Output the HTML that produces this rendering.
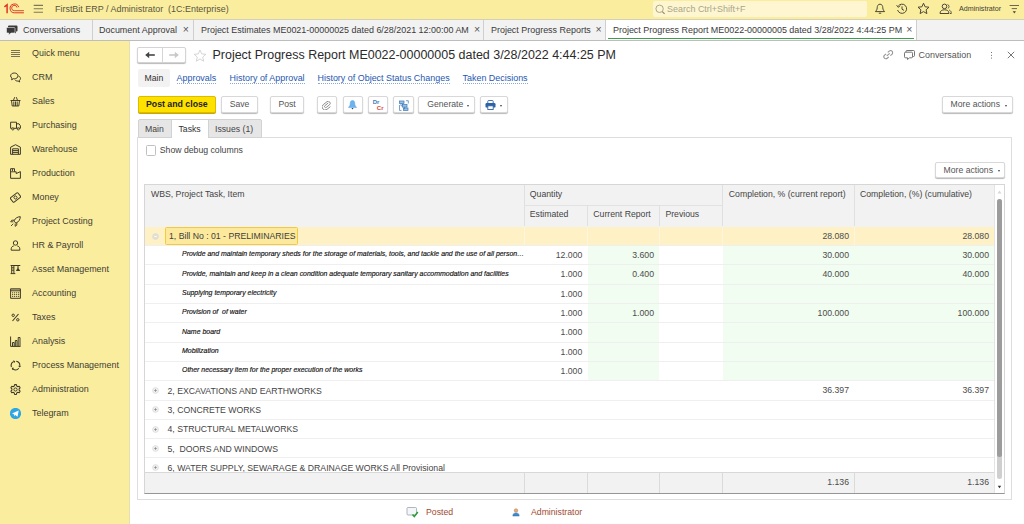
<!DOCTYPE html>
<html>
<head>
<meta charset="utf-8">
<title>Project Progress Report</title>
<style>
*{box-sizing:border-box;margin:0;padding:0}
html,body{width:1024px;height:524px;overflow:hidden;background:#fff;font-family:"Liberation Sans",Arial,sans-serif;color:#333}
.abs{position:absolute}
#top{position:absolute;left:0;top:0;width:1024px;height:19.600px;background:#fbed9e}
#top .title{position:absolute;left:55px;top:4px;font-size:8.95px;color:#59563f;white-space:pre;line-height:11px}
#search{position:absolute;left:653.400px;top:1.300px;width:213.600px;height:15.600px;background:#fdf6d0;border-radius:2px}
#search span{position:absolute;left:13.700px;top:1.700px;font-size:8.95px;color:#aaa58a;line-height:12px}
#tabs{position:absolute;left:0;top:19px;width:1024px;height:22px;background:#f2f2f2;border-top:1px solid #d4d0b8;border-bottom:1px solid #bdbdbd}
.tab{position:absolute;top:0;height:20px;border-right:1px solid #cfcfcf;font-size:8.95px;line-height:20px;color:#3a3a3a;white-space:nowrap}
.tab .x{position:absolute;top:-1.200px;font-size:10.500px;color:#555}
#side{position:absolute;left:0;top:41px;width:129.700px;border-right:1px solid #e6dfb4;height:484px;background:#fbed9e}
.mi{position:absolute;left:32px;font-size:8.95px;color:#3d3d33;line-height:12px;white-space:nowrap}
.ic{position:absolute;left:10px}
#main{position:absolute;left:130.700px;top:41px;width:894px;height:484px;background:#fff}
.btn{position:absolute;height:17px;border:1px solid #d8d8d8;border-radius:2px;background:#fff;font-size:8.65px;line-height:15.300px;text-align:center;color:#555;box-shadow:0 1px 1px rgba(0,0,0,0.28);white-space:nowrap}
.lnk{position:absolute;top:72px;font-size:8.95px;line-height:12px;color:#2657b0;border-bottom:1px dotted #8fa6d8;white-space:nowrap;height:12px}
.t{position:absolute;white-space:nowrap;font-size:8.7px;line-height:12px;color:#444}
.num{position:absolute;white-space:nowrap;font-size:8.7px;line-height:12px;color:#4c4c4c;text-align:right}
.it{position:absolute;left:182px;-webkit-text-stroke:0.15px #111;white-space:nowrap;font-size:6.95px;line-height:10px;color:#111;font-style:italic}
.hl{position:absolute;left:145px;width:850px;height:1px;background:#ececec}
.vl{position:absolute;width:1px;background:#dcdcdc}
.dd{position:absolute;top:7.600px;width:0;height:0;border-left:1.800px solid transparent;border-right:1.800px solid transparent;border-top:2px solid #444}
</style>
</head>
<body>
<!-- top bar -->
<div id="top">
  <svg class="abs" style="left:0;top:0" width="26" height="18" viewBox="0 0 26 18">
    <g fill="none" stroke="#df3327">
      <path d="M4.400 6.800L7.100 4.700V13.200" stroke-width="1.500"/>
      <path d="M18.700 7.200A4.400 4.400 0 1 0 14.500 12.800H23.900" stroke-width="1"/>
      <path d="M17 7.600A2.700 2.700 0 1 0 14.500 10.700H23.900" stroke-width="0.900"/>
    </g>
  </svg>
  <svg class="abs" style="left:33px;top:3px" width="11" height="12" viewBox="0 0 11 12"><g stroke="#7d785a" stroke-width="1.100"><path d="M0.700 2.400H10M0.700 5.800H10M0.700 9.200H10"/></g></svg>
  <div class="title">FirstBit ERP / Administrator  (1C:Enterprise)</div>
  <div id="search">
    <svg class="abs" style="left:1.500px;top:2.500px" width="11" height="11" viewBox="0 0 11 11"><circle cx="4.600" cy="4.800" r="3.700" fill="none" stroke="#a29e86" stroke-width="0.900"/><path d="M7.300 7.600L9.600 9.900" stroke="#8a866e" stroke-width="1.100"/></svg>
    <span>Search Ctrl+Shift+F</span>
  </div>
  <!-- bell -->
  <svg class="abs" style="left:873.500px;top:3px" width="12" height="12" viewBox="0 0 12 12"><path d="M6 1.2C4 1.2 3.2 3 3.2 4.8C3.2 6.8 2.2 7.6 1.4 8.6H10.6C9.8 7.600 8.800 6.800 8.800 4.800C8.800 3 8 1.200 6 1.200Z M4.800 10.200H7.200" fill="none" stroke="#4a4738" stroke-width="1"/></svg>
  <!-- history -->
  <svg class="abs" style="left:895.600px;top:3px" width="12" height="12" viewBox="0 0 12 12"><path d="M2.2 3.200A4.600 4.600 0 1 1 1.600 7" fill="none" stroke="#4a4738" stroke-width="1"/><path d="M6 3.400V6.200L8 7.400" fill="none" stroke="#4a4738" stroke-width="1"/><path d="M0.600 2.200L2.400 4.400L4.200 2.600" fill="none" stroke="#4a4738" stroke-width="1"/></svg>
  <!-- star -->
  <svg class="abs" style="left:917px;top:2px" width="13" height="13" viewBox="0 0 13 13"><path d="M6.500 1.200L8.100 4.800L12 5.200L9.100 7.800L9.900 11.600L6.500 9.600L3.100 11.600L3.900 7.800L1 5.200L4.900 4.800Z" fill="none" stroke="#4a4738" stroke-width="1" stroke-linejoin="round"/></svg>
  <!-- user -->
  <svg class="abs" style="left:938.800px;top:3px" width="13" height="12" viewBox="0 0 13 12"><circle cx="5.500" cy="3.400" r="2.300" fill="none" stroke="#4a4738" stroke-width="1"/><path d="M1 10.500C1 7.800 3 6.800 5.500 6.800C8 6.800 10 7.800 10 10.500Z" fill="none" stroke="#4a4738" stroke-width="1"/><path d="M8.500 1.600A2 2 0 0 1 8.800 5.400M10.200 7C11.600 7.600 12.300 8.600 12.300 10.500H11" fill="none" stroke="#4a4738" stroke-width="0.900"/></svg>
  <div class="t" style="left:959px;top:4px;font-size:7.150px;line-height:10px;color:#3d3d33">Administrator</div>
  <svg class="abs" style="left:1009px;top:4px" width="11" height="11" viewBox="0 0 11 11"><path d="M0.600 1.500H10M2.700 4.600H8" stroke="#6b6650" stroke-width="1" fill="none"/><path d="M3.700 7.300H7L5.350 9.400Z" fill="#4a4738"/></svg>
</div>

<!-- tabs -->
<div id="tabs">
  <div class="tab" style="left:0;width:93px">
    <svg class="abs" style="left:6px;top:5px" width="12" height="11" viewBox="0 0 12 11"><path d="M3 0.500H10.500Q11.500 0.500 11.500 1.500V5.500Q11.500 6.500 10.500 6.500H10V8.500L7.500 6.500H3Q2 6.500 2 5.500V1.500Q2 0.500 3 0.500Z" fill="#3a3a3a"/><path d="M1.500 2.500H8Q9 2.500 9 3.500V7Q9 8 8 8H5L2.800 10V8H1.500Q0.500 8 0.500 7V3.500Q0.500 2.500 1.500 2.500Z" fill="#3a3a3a" stroke="#f2f2f2" stroke-width="0.600"/></svg>
    <span style="position:absolute;left:23px">Conversations</span></div>
  <div class="tab" style="left:93px;width:101px"><span style="position:absolute;left:6px">Document Approval</span><span class="x" style="left:89.800px">×</span></div>
  <div class="tab" style="left:194px;width:290px"><span style="position:absolute;left:7px">Project Estimates ME0021-00000025 dated 6/28/2021 12:00:00 AM</span><span class="x" style="left:280px">×</span></div>
  <div class="tab" style="left:484px;width:122px"><span style="position:absolute;left:7px">Project Progress Reports</span><span class="x" style="left:111.500px">×</span></div>
  <div class="tab" style="left:606px;width:311.300px;background:#fff;height:20px"><i style="position:absolute;left:2px;right:2px;top:18px;height:1.400px;background:#3f9e4d"></i><span style="position:absolute;left:7px">Project Progress Report ME0022-00000005 dated 3/28/2022 4:44:25 PM</span><span class="x" style="left:300.300px">×</span></div>
</div>

<!-- sidebar -->
<div id="side">
<svg class="ic" style="top:6.5px" width="11" height="11" viewBox="0 0 11 11"><path d="M1 2.500H10M1 4.500H10M1 6.500H10M1 8.500H10" stroke="#77725a" stroke-width="1" fill="none"/></svg>
<div class="mi" style="top:6.0px">Quick menu</div>
<svg class="ic" style="top:30.5px" width="11" height="11" viewBox="0 0 11 11"><path d="M4.300 1C2.200 1 0.600 2.200 0.600 3.900C0.600 4.900 1.200 5.700 2 6.200L1.600 7.800L3.400 6.700C3.700 6.750 4 6.800 4.300 6.800C6.400 6.800 8 5.500 8 3.900C8 2.200 6.400 1 4.300 1Z" fill="none" stroke="#3d3a2c" stroke-width="1"/><path d="M8.600 4.200C9.800 4.600 10.500 5.400 10.500 6.500C10.500 7.400 10 8.100 9.300 8.500L9.700 10L8.100 9C6.900 9.200 5.600 8.800 5 7.800" fill="none" stroke="#3d3a2c" stroke-width="1"/></svg>
<div class="mi" style="top:30.0px">CRM</div>
<svg class="ic" style="top:54.5px" width="11" height="11" viewBox="0 0 11 11"><path d="M0.500 4.500H10.500M1.500 4.500L2.200 10H8.800L9.500 4.500M3.800 5.500V10M5.500 5.500V10M7.200 5.500V10M3.400 4.500L4.700 1.200M7.600 4.500L6.300 1.200" fill="none" stroke="#3d3a2c" stroke-width="0.950"/></svg>
<div class="mi" style="top:54.0px">Sales</div>
<svg class="ic" style="top:78.5px" width="11" height="11" viewBox="0 0 11 11"><path d="M0.600 2.200H6.500V8.300H0.600ZM6.500 3.800H9L10.400 5.800V8.300H6.500" fill="none" stroke="#3d3a2c" stroke-width="1"/><circle cx="2.800" cy="8.900" r="1.100" fill="#fbed9e" stroke="#3d3a2c" stroke-width="0.900"/><circle cx="8.300" cy="8.900" r="1.100" fill="#fbed9e" stroke="#3d3a2c" stroke-width="0.900"/></svg>
<div class="mi" style="top:78.0px">Purchasing</div>
<svg class="ic" style="top:102.5px" width="11" height="11" viewBox="0 0 11 11"><path d="M0.600 10.300V3.200L5.500 0.700L10.400 3.200V10.300Z" fill="none" stroke="#3d3a2c" stroke-width="1"/><path d="M2.600 10.300V4.800H8.400V10.300M2.600 6.600H8.400M2.600 8.400H8.400" fill="none" stroke="#3d3a2c" stroke-width="1"/></svg>
<div class="mi" style="top:102.0px">Warehouse</div>
<svg class="ic" style="top:126.5px" width="11" height="11" viewBox="0 0 11 11"><path d="M0.600 10.300V0.700H4.500V3.800H6.200V5.600L10.400 3.600V10.300Z" fill="none" stroke="#3d3a2c" stroke-width="1"/><path d="M2.500 0.700V3.200M0.600 3.800H4.500" fill="none" stroke="#3d3a2c" stroke-width="0.900"/></svg>
<div class="mi" style="top:126.0px">Production</div>
<svg class="ic" style="top:150.5px" width="11" height="11" viewBox="0 0 11 11"><g transform="rotate(-38 5.500 5.500)"><rect x="0.800" y="2.700" width="9.400" height="5.600" rx="0.800" fill="none" stroke="#3d3a2c" stroke-width="1"/><circle cx="5.500" cy="5.500" r="1.500" fill="none" stroke="#3d3a2c" stroke-width="0.900"/></g></svg>
<div class="mi" style="top:150.0px">Money</div>
<svg class="ic" style="top:174.5px" width="11" height="11" viewBox="0 0 11 11"><path d="M10.300 0.700C7.500 0.700 5.300 2.200 3.800 5L6 7.200C8.800 5.700 10.300 3.500 10.300 0.700Z" fill="none" stroke="#3d3a2c" stroke-width="1" stroke-linejoin="round"/><path d="M4.300 4.200H1.800L0.700 5.800H3.400M6.800 6.700V9.200L5.200 10.300V7.600M3.300 7.700L1 10" fill="none" stroke="#3d3a2c" stroke-width="0.900"/></svg>
<div class="mi" style="top:174.0px">Project Costing</div>
<svg class="ic" style="top:198.5px" width="11" height="11" viewBox="0 0 11 11"><circle cx="5.500" cy="3" r="2.200" fill="none" stroke="#3d3a2c" stroke-width="1"/><path d="M1.200 10.200V8.800C1.200 7 2.600 6.200 3.800 5.900M7.200 5.900C8.400 6.200 9.800 7 9.800 8.800V10.200H1.200" fill="none" stroke="#3d3a2c" stroke-width="1"/></svg>
<div class="mi" style="top:198.0px">HR &amp; Payroll</div>
<svg class="ic" style="top:222.5px" width="11" height="11" viewBox="0 0 11 11"><path d="M0.600 1.500H10.300M1.700 1.500V9.200M3.900 1.500V9.200M0.600 9.600H5.300M1.700 3.800H3.900M1.700 6.200H3.900M8 1.500V4" fill="none" stroke="#3d3a2c" stroke-width="1"/><path d="M8 3.200L5.900 6.900H10.200Z" fill="#3d3a2c"/></svg>
<div class="mi" style="top:222.0px">Asset Management</div>
<svg class="ic" style="top:246.5px" width="11" height="11" viewBox="0 0 11 11"><path d="M0.600 0.800H10.400V10.300H0.600ZM0.600 2.800H10.400" fill="none" stroke="#3d3a2c" stroke-width="1"/><path d="M0.600 1.700H10.400" stroke="#3d3a2c" stroke-width="0.800" opacity="0.500"/><path d="M2.0 4.8h1.200M4.0 4.8h1.200M6.0 4.8h1.200M8.0 4.8h1.200M2.0 6.6h1.200M4.0 6.6h1.200M6.0 6.6h1.200M8.0 6.6h1.200M2.0 8.4h1.200M4.0 8.4h1.200M6.0 8.4h1.200M8.0 8.4h1.200" stroke="#3d3a2c" stroke-width="0.900"/></svg>
<div class="mi" style="top:246.0px">Accounting</div>
<svg class="ic" style="top:270.5px" width="11" height="11" viewBox="0 0 11 11"><path d="M8.500 2L2.500 9" stroke="#3d3a2c" stroke-width="1.100" fill="none"/><circle cx="3.200" cy="3.300" r="1.200" fill="none" stroke="#3d3a2c" stroke-width="1"/><circle cx="7.800" cy="7.800" r="1.200" fill="none" stroke="#3d3a2c" stroke-width="1"/></svg>
<div class="mi" style="top:270.0px">Taxes</div>
<svg class="ic" style="top:294.5px" width="11" height="11" viewBox="0 0 11 11"><path d="M0.600 0.500V10.400M2.500 10.400V6.500H4.200V10.400M5.300 10.400V4.500H7V10.400M8.200 10.400V1.500H10V10.400M0.600 10.400H10.400" fill="none" stroke="#3d3a2c" stroke-width="1"/></svg>
<div class="mi" style="top:294.0px">Analysis</div>
<svg class="ic" style="top:318.5px" width="11" height="11" viewBox="0 0 11 11"><path d="M6.25 1.27A4.3 4.3 0 0 1 9.78 5.87M8.79 8.26A4.3 4.3 0 0 1 3.03 9.02M1.46 6.97A4.3 4.3 0 0 1 3.68 1.60" fill="none" stroke="#3d3a2c" stroke-width="1.100"/><path d="M11.38 6.01L9.33 7.45L8.19 5.74ZM2.12 10.33L1.89 7.84L3.95 7.71ZM3.01 0.15L5.27 1.21L4.36 3.05Z" fill="#3d3a2c"/></svg>
<div class="mi" style="top:318.0px">Process Management</div>
<svg class="ic" style="top:342.5px" width="11" height="11" viewBox="0 0 11 11"><path d="M4.600 0.600H6.400L6.700 2L7.900 2.700L9.200 2.200L10.100 3.800L9.100 4.800V6.200L10.100 7.200L9.200 8.800L7.900 8.300L6.700 9L6.400 10.400H4.600L4.300 9L3.100 8.300L1.800 8.800L0.900 7.200L1.900 6.200V4.800L0.900 3.800L1.800 2.200L3.100 2.700L4.300 2Z" fill="none" stroke="#3d3a2c" stroke-width="1.050" stroke-linejoin="round"/><circle cx="5.500" cy="5.500" r="1.600" fill="none" stroke="#3d3a2c" stroke-width="1"/></svg>
<div class="mi" style="top:342.0px">Administration</div>
<svg class="ic" style="top:366.5px" width="11" height="11" viewBox="0 0 11 11"><circle cx="5.500" cy="5.500" r="5.600" fill="#2ea6e4"/><path d="M2 5.500L8.700 2.500L7.500 8.800L5.300 7.100L4.400 8.200L4.200 6.400Z" fill="#fff"/></svg>
<div class="mi" style="top:366.0px">Telegram</div>
</div>

<!-- main -->
<div id="main"></div>
<div class="abs" style="left:137px;top:47px;width:49px;height:16px;border:1px solid #d4d4d4;border-radius:2px;background:#fff;box-shadow:0 1px 1px rgba(0,0,0,0.28)"></div>
<div class="abs" style="left:162px;top:48px;width:1px;height:14px;background:#d4d4d4"></div>
<svg class="abs" style="left:144px;top:50px" width="12" height="10" viewBox="0 0 12 10"><path d="M2.500 5H10.800" stroke="#444" stroke-width="1.600" fill="none"/><path d="M1.200 5L5.200 1.700V8.300Z" fill="#444"/></svg>
<svg class="abs" style="left:168px;top:50px" width="12" height="10" viewBox="0 0 12 10"><path d="M1.200 5H9.500" stroke="#c8c8c8" stroke-width="1.600" fill="none"/><path d="M10.800 5L6.800 1.700V8.300Z" fill="#c8c8c8"/></svg>
<svg class="abs" style="left:193px;top:49px" width="14" height="13" viewBox="0 0 14 13"><path d="M7 1L8.700 4.900L12.900 5.300L9.700 8.100L10.700 12.200L7 10L3.300 12.200L4.300 8.100L1.100 5.300L5.300 4.900Z" fill="#fff" stroke="#d0d0d0" stroke-width="0.900" stroke-linejoin="round"/></svg>
<div class="abs" id="ttl" style="left:212.5px;top:46.7px;font-size:12.47px;line-height:17px;color:#2b2b2b;white-space:nowrap">Project Progress Report ME0022-00000005 dated 3/28/2022 4:44:25 PM</div>
<svg class="abs" style="left:881.500px;top:49.300px" width="12.500" height="11.400" viewBox="0 0 11 10"><g fill="none" stroke="#929292" stroke-width="0.900" transform="rotate(-40 5.500 5)"><path d="M4.600 3.200H2.800A1.800 1.800 0 0 0 2.800 6.800H4.600"/><path d="M6.400 3.200H8.200A1.800 1.800 0 0 1 8.200 6.800H6.400"/><path d="M3.800 5H7.200"/></g></svg>
<svg class="abs" style="left:904px;top:50px" width="11" height="10" viewBox="0 0 11 10"><g fill="#fff" stroke="#666" stroke-width="0.900"><path d="M3 0.500H9.500Q10.500 0.500 10.500 1.500V5.500Q10.500 6.500 9.500 6.500H3Q2 6.500 2 5.500V1.500Q2 0.500 3 0.500Z"/><path d="M1.500 2.200H7.500Q8.500 2.200 8.500 3.200V6.800Q8.500 7.800 7.500 7.800H5.500L3.500 9.500V7.800H1.500Q0.500 7.800 0.500 6.800V3.200Q0.500 2.200 1.500 2.200Z"/></g></svg>
<div class="t" style="left:918.500px;top:49px;color:#555;font-size:8.950px">Conversation</div>
<div class="abs" style="left:990.500px;top:51.500px;width:1.700px;height:1.700px;border-radius:0.600px;background:#444;box-shadow:0 2.700px 0 #444,0 5.400px 0 #444"></div>
<svg class="abs" style="left:1007px;top:51px" width="8" height="8" viewBox="0 0 8 8"><path d="M0.800 0.800L7.200 7.200M7.200 0.800L0.800 7.200" stroke="#666" stroke-width="0.900"/></svg>
<div class="abs" style="left:137.500px;top:69px;width:32.500px;height:18px;background:#f2f2f2;border-radius:2px"></div>
<div class="t" style="left:144.400px;top:72px;color:#333">Main</div>
<div class="lnk" style="left:176.5px">Approvals</div>
<div class="lnk" style="left:229.6px">History of Approval</div>
<div class="lnk" style="left:317.5px">History of Object Status Changes</div>
<div class="lnk" style="left:462.5px">Taken Decisions</div>
<div class="btn" style="left:137.5px;top:96.3px;width:78.7px;height:16.3px;background:#ffe100;border-color:#dcbc00;box-shadow:0 1px 0 #c9a700;font-weight:bold;color:#222;font-size:8.750px">Post and close</div>
<div class="btn" style="left:221.0px;top:96.3px;width:37.2px;height:16.3px;">Save</div>
<div class="btn" style="left:270.0px;top:96.3px;width:34.2px;height:16.3px;">Post</div>
<div class="btn" style="left:317.2px;top:96.3px;width:20.0px;height:16.3px;"><svg class="abs" style="left:4.300px;top:3.600px" width="10" height="9" viewBox="0 0 10 9"><g transform="rotate(-38 5 4.500)"><path d="M7.600 3.300H3.300A1.100 1.100 0 0 0 3.300 5.500H7.300A2 2 0 0 0 7.300 1.500H2.600A3 3 0 0 0 2.600 7.500H7" fill="none" stroke="#8c8c8c" stroke-width="0.900"/></g></svg></div>
<div class="btn" style="left:342.5px;top:96.3px;width:20.4px;height:16.3px;"><svg class="abs" style="left:4.600px;top:2.500px" width="9" height="10" viewBox="0 0 9 10"><path d="M4.500 0.600C2.900 0.600 2.200 1.900 2.200 3.500C2.200 5.400 1.500 6.200 0.600 7.100V7.600H8.400V7.100C7.500 6.200 6.800 5.400 6.800 3.500C6.800 1.900 6.100 0.600 4.500 0.600Z" fill="#6db3f0" stroke="#5a9fdc" stroke-width="0.500"/><path d="M3.500 8.100H5.500L4.500 9.500Z" fill="#3a3a3a"/></svg></div>
<div class="btn" style="left:367.5px;top:96.3px;width:20.4px;height:16.3px;"><span style="position:absolute;left:4.200px;top:1.500px;font-size:6px;line-height:7px;font-weight:bold;color:#3b78b5">Dr</span><span style="position:absolute;left:8.300px;top:7.500px;font-size:6px;line-height:7px;font-weight:bold;color:#d9433a">Cr</span></div>
<div class="btn" style="left:393.3px;top:96.3px;width:20.4px;height:16.3px;"><svg class="abs" style="left:3.700px;top:2.500px" width="11" height="11" viewBox="0 0 11 11"><g fill="#9cc0e4" stroke="#3a78b8" stroke-width="0.700"><rect x="1.500" y="1" width="4.500" height="2.600"/><rect x="4.500" y="4.500" width="4.500" height="2.600"/><rect x="5.500" y="8" width="4.500" height="2.400"/></g><path d="M3 3.600V5.800H4.500M6.500 7.100V9.200M1.500 5V10.400H3.500M8 0.700H10.300V3.500" fill="none" stroke="#3a78b8" stroke-width="0.700"/></svg></div>
<div class="btn" style="left:418.2px;top:96.3px;width:57.0px;height:16.3px;"><span style="position:absolute;left:8.100px;color:#555">Generate</span><span class="dd" style="left:47.600px"></span></div>
<div class="btn" style="left:480.0px;top:96.3px;width:28.0px;height:16.3px;"><svg class="abs" style="left:4.300px;top:3.200px" width="11" height="10" viewBox="0 0 11 10"><path d="M2.800 3V1.300Q2.800 0.500 3.600 0.500H7.400Q8.200 0.500 8.200 1.300V3" fill="#fff" stroke="#2f62a4" stroke-width="0.900"/><rect x="0.500" y="3" width="10" height="4.600" rx="1.200" fill="#2f62a4"/><rect x="2.800" y="5.800" width="5.400" height="3.700" fill="#fff" stroke="#2f62a4" stroke-width="0.900"/></svg><span class="dd" style="left:18.600px"></span></div>
<div class="btn" style="left:942.0px;top:96.3px;width:70.7px;height:16.3px;"><span style="position:absolute;left:7.600px">More actions</span><span class="dd" style="left:62.200px"></span></div>
<div class="abs" style="left:137.200px;top:137px;width:875.300px;height:363px;border:1px solid #dedede;background:#fff"></div>
<div class="abs" style="left:137.500px;top:119px;width:124px;height:18.500px;background:#e6e6e6;border:1px solid #d2d2d2;border-radius:2px 2px 0 0"></div>
<div class="abs" style="left:171px;top:119px;width:37.500px;height:19px;background:#fff;border:1px solid #d2d2d2;border-bottom:none"></div>
<div class="t" style="left:145px;top:122.500px">Main</div>
<div class="t" style="left:178.500px;top:122.500px;color:#333">Tasks</div>
<div class="t" style="left:215px;top:122.500px">Issues (1)</div>
<div class="abs" style="left:145.500px;top:145px;width:10px;height:10.500px;border:1px solid #c0c0c0;border-radius:1.500px;background:#fff"></div>
<div class="t" style="left:159.800px;top:143.500px">Show debug columns</div>
<div class="btn" style="left:935.0px;top:161.5px;width:70.0px;height:16.3px;"><span style="position:absolute;left:7.600px">More actions</span><span class="dd" style="left:62px"></span></div>
<div class="abs" style="left:144.0px;top:184.3px;width:860.7px;height:309.5px;border:1px solid #d6d6d6;border-bottom:1px solid #969696;background:#fff"></div>
<div class="abs" style="left:145.0px;top:185.3px;width:849.5px;height:41.7px;background:#f2f2f2"></div>
<div class="abs" style="left:145.0px;top:226.8px;width:849.5px;height:18.4px;background:#fef1c6"></div>
<div class="abs" style="left:587.8px;top:245.6px;width:71.7px;height:135.1px;background:#f0fdf0"></div>
<div class="abs" style="left:723.0px;top:245.6px;width:271.5px;height:135.1px;background:#f0fdf0"></div>
<div class="abs" style="left:145.0px;top:245.1px;width:849.5px;height:1px;background:#efefef"></div>
<div class="abs" style="left:145.0px;top:264.4px;width:849.5px;height:1px;background:#efefef"></div>
<div class="abs" style="left:145.0px;top:283.7px;width:849.5px;height:1px;background:#efefef"></div>
<div class="abs" style="left:145.0px;top:303.0px;width:849.5px;height:1px;background:#efefef"></div>
<div class="abs" style="left:145.0px;top:322.3px;width:849.5px;height:1px;background:#efefef"></div>
<div class="abs" style="left:145.0px;top:341.6px;width:849.5px;height:1px;background:#efefef"></div>
<div class="abs" style="left:145.0px;top:360.9px;width:849.5px;height:1px;background:#efefef"></div>
<div class="abs" style="left:145.0px;top:380.2px;width:849.5px;height:1px;background:#efefef"></div>
<div class="abs" style="left:145.0px;top:399.5px;width:849.5px;height:1px;background:#efefef"></div>
<div class="abs" style="left:145.0px;top:418.8px;width:849.5px;height:1px;background:#efefef"></div>
<div class="abs" style="left:145.0px;top:438.1px;width:849.5px;height:1px;background:#efefef"></div>
<div class="abs" style="left:145.0px;top:457.4px;width:849.5px;height:1px;background:#efefef"></div>
<div class="abs" style="left:145.0px;top:472.3px;width:849.5px;height:20.5px;background:#f2f2f2;border-top:1px solid #d8d8d8"></div>
<div class="abs" style="left:524.0px;top:205px;width:198.5px;height:1px;background:#e2e2e2"></div>
<div class="vl" style="left:523.5px;top:185.3px;height:41.0px;background:#e0e0e0"></div>
<div class="vl" style="left:523.5px;top:226.6px;height:18.5px;background:#fdf6dc"></div>
<div class="vl" style="left:523.5px;top:473.0px;height:19.8px;background:#dadada"></div>
<div class="vl" style="left:586.8px;top:205.0px;height:21.3px;background:#e0e0e0"></div>
<div class="vl" style="left:586.8px;top:226.6px;height:18.5px;background:#fdf6dc"></div>
<div class="vl" style="left:586.8px;top:473.0px;height:19.8px;background:#dadada"></div>
<div class="vl" style="left:659.0px;top:205.0px;height:21.3px;background:#e0e0e0"></div>
<div class="vl" style="left:659.0px;top:226.6px;height:18.5px;background:#fdf6dc"></div>
<div class="vl" style="left:659.0px;top:473.0px;height:19.8px;background:#dadada"></div>
<div class="vl" style="left:722.0px;top:185.3px;height:41.0px;background:#e0e0e0"></div>
<div class="vl" style="left:722.0px;top:226.6px;height:18.5px;background:#fdf6dc"></div>
<div class="vl" style="left:722.0px;top:473.0px;height:19.8px;background:#dadada"></div>
<div class="vl" style="left:854.0px;top:185.3px;height:41.0px;background:#e0e0e0"></div>
<div class="vl" style="left:854.0px;top:226.6px;height:18.5px;background:#fdf6dc"></div>
<div class="vl" style="left:854.0px;top:473.0px;height:19.8px;background:#dadada"></div>
<div class="vl" style="left:994.0px;top:185.3px;height:307.5px;background:#e4e4e4"></div>
<div class="t" style="left:151.0px;top:188.1px;">WBS, Project Task, Item</div>
<div class="t" style="left:529.8px;top:188.1px;">Quantity</div>
<div class="t" style="left:529.8px;top:208.4px;">Estimated</div>
<div class="t" style="left:593.3px;top:208.4px;">Current Report</div>
<div class="t" style="left:665.4px;top:208.4px;">Previous</div>
<div class="t" style="left:728.8px;top:188.1px;">Completion, % (current report)</div>
<div class="t" style="left:860.0px;top:188.1px;">Completion, (%) (cumulative)</div>
<div class="abs" style="left:165.300px;top:227px;width:132.500px;height:17.500px;background:#fce99c;border:1.300px solid #f3ca3e;border-radius:1.500px"></div>
<svg class="abs" style="left:152px;top:232.8px" width="7" height="7" viewBox="0 0 7 7"><circle cx="3.500" cy="3.500" r="2.900" fill="#e4e0d0" stroke="#dcdcdc" stroke-width="0.800"/><path d="M2.200 3.500H4.800" stroke="#ffffff" stroke-width="0.800"/></svg>
<div class="t" style="left:169.0px;top:230.3px;color:#404040">1, Bill No : 01 - PRELIMINARIES</div>
<div class="num" style="left:929.0px;width:60px;top:229.9px">28.080</div>
<div class="num" style="left:789.0px;width:60px;top:229.9px">28.080</div>
<div class="it" style="top:249.4px">Provide and maintain temporary sheds for the storage of materials, tools, and tackle and the use of all person…</div>
<div class="num" style="left:522.3px;width:60px;top:249.2px">12.000</div>
<div class="num" style="left:594.0px;width:60px;top:249.2px">3.600</div>
<div class="num" style="left:789.0px;width:60px;top:249.2px">30.000</div>
<div class="num" style="left:929.0px;width:60px;top:249.2px">30.000</div>
<div class="it" style="top:268.7px">Provide, maintain and keep in a clean condition adequate temporary sanitary accommodation and facilities</div>
<div class="num" style="left:522.3px;width:60px;top:268.4px">1.000</div>
<div class="num" style="left:594.0px;width:60px;top:268.4px">0.400</div>
<div class="num" style="left:789.0px;width:60px;top:268.4px">40.000</div>
<div class="num" style="left:929.0px;width:60px;top:268.4px">40.000</div>
<div class="it" style="top:288.0px">Supplying temporary electricity</div>
<div class="num" style="left:522.3px;width:60px;top:287.8px">1.000</div>
<div class="it" style="top:307.2px">Provision of&nbsp; of water</div>
<div class="num" style="left:522.3px;width:60px;top:307.0px">1.000</div>
<div class="num" style="left:594.0px;width:60px;top:307.0px">1.000</div>
<div class="num" style="left:789.0px;width:60px;top:307.0px">100.000</div>
<div class="num" style="left:929.0px;width:60px;top:307.0px">100.000</div>
<div class="it" style="top:326.6px">Name board</div>
<div class="num" style="left:522.3px;width:60px;top:326.3px">1.000</div>
<div class="it" style="top:345.9px">Mobilization</div>
<div class="num" style="left:522.3px;width:60px;top:345.6px">1.000</div>
<div class="it" style="top:365.1px">Other necessary item for the proper execution of the works</div>
<div class="num" style="left:522.3px;width:60px;top:364.9px">1.000</div>
<svg class="abs" style="left:152px;top:387.2px" width="7" height="7" viewBox="0 0 7 7"><circle cx="3.500" cy="3.500" r="2.900" fill="#f0f0f0" stroke="#dcdcdc" stroke-width="0.800"/><path d="M2.200 3.500H4.800M3.500 2.200V4.800" stroke="#8a8a8a" stroke-width="0.800"/></svg>
<div class="t" style="left:167.5px;top:384.7px;">2, EXCAVATIONS AND EARTHWORKS</div>
<svg class="abs" style="left:152px;top:406.4px" width="7" height="7" viewBox="0 0 7 7"><circle cx="3.500" cy="3.500" r="2.900" fill="#f0f0f0" stroke="#dcdcdc" stroke-width="0.800"/><path d="M2.200 3.500H4.800M3.500 2.200V4.800" stroke="#8a8a8a" stroke-width="0.800"/></svg>
<div class="t" style="left:167.5px;top:403.9px;">3, CONCRETE WORKS</div>
<svg class="abs" style="left:152px;top:425.8px" width="7" height="7" viewBox="0 0 7 7"><circle cx="3.500" cy="3.500" r="2.900" fill="#f0f0f0" stroke="#dcdcdc" stroke-width="0.800"/><path d="M2.200 3.500H4.800M3.500 2.200V4.800" stroke="#8a8a8a" stroke-width="0.800"/></svg>
<div class="t" style="left:167.5px;top:423.2px;">4, STRUCTURAL METALWORKS</div>
<svg class="abs" style="left:152px;top:445.1px" width="7" height="7" viewBox="0 0 7 7"><circle cx="3.500" cy="3.500" r="2.900" fill="#f0f0f0" stroke="#dcdcdc" stroke-width="0.800"/><path d="M2.200 3.500H4.800M3.500 2.200V4.800" stroke="#8a8a8a" stroke-width="0.800"/></svg>
<div class="t" style="left:167.5px;top:442.6px;">5,&nbsp; DOORS AND WINDOWS</div>
<div class="abs" style="left:146px;top:457.9px;width:840px;height:14.4px;overflow:hidden">
<svg class="abs" style="left:6px;top:6.5px" width="7" height="7" viewBox="0 0 7 7"><circle cx="3.500" cy="3.500" r="2.900" fill="#f0f0f0" stroke="#dcdcdc" stroke-width="0.800"/><path d="M2.200 3.500H4.800M3.500 2.200V4.800" stroke="#8a8a8a" stroke-width="0.800"/></svg>
<div class="t" style="left:21.500px;top:4.0px">6, WATER SUPPLY, SEWARAGE &amp; DRAINAGE WORKS All Provisional</div>
</div>
<div class="num" style="left:789.0px;width:60px;top:384.2px">36.397</div>
<div class="num" style="left:929.0px;width:60px;top:384.2px">36.397</div>
<div class="num" style="left:789px;width:60px;top:475.8px">1.136</div>
<div class="num" style="left:929px;width:60px;top:475.8px">1.136</div>
<div class="abs" style="left:997px;top:199px;width:5px;height:280px;border-radius:2.500px;background:#cfcfcf"></div>
<div class="abs" style="left:997px;top:199px;width:5px;height:258px;border-radius:2.500px;background:#9c9c9c"></div>
<svg class="abs" style="left:997px;top:190px" width="5" height="4" viewBox="0 0 5 4"><path d="M0.500 3.500L2.500 0.500L4.500 3.500Z" fill="#d8d8d8"/></svg>
<svg class="abs" style="left:997px;top:484.500px" width="5" height="4" viewBox="0 0 5 4"><path d="M0.800 0.800L2.500 3.200L4.200 0.800Z" fill="#333"/></svg>
<svg class="abs" style="left:406px;top:506px" width="13" height="12" viewBox="0 0 13 12"><rect x="1" y="1.500" width="9.500" height="7.500" rx="1" fill="#f4f6f8" stroke="#9aa4ae" stroke-width="0.800"/><path d="M6.500 8.500L8.300 10.500L11.800 6" fill="none" stroke="#2e9a3a" stroke-width="1.500"/></svg>
<div class="t" style="left:426px;top:505.500px;color:#a04a32">Posted</div>
<svg class="abs" style="left:512px;top:507.500px" width="8" height="9" viewBox="0 0 10 11"><circle cx="5" cy="3" r="2.200" fill="#e8b078" stroke="#a06030" stroke-width="0.500"/><path d="M1 10C1 7 2.500 6 5 6C7.500 6 9 7 9 10Z" fill="#3a8ad0" stroke="#2a62a0" stroke-width="0.500"/></svg>
<div class="t" style="left:531px;top:505.500px;color:#a04a32">Administrator</div>
</body>
</html>
